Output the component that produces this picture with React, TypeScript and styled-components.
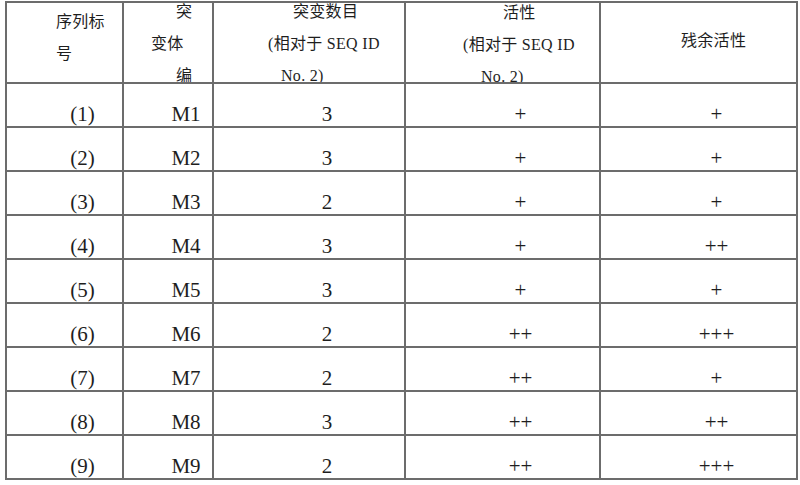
import React from "react";
import styled, { createGlobalStyle } from "styled-components";

const GlobalStyle = createGlobalStyle`
  html, body {
    margin: 0;
    padding: 0;
    background: #ffffff;
  }
`;

const Table = styled.table`
  border-collapse: collapse;
  table-layout: fixed;
  width: 791px;
  margin: 1px 0 0 5px;
  font-family: "Liberation Serif", "Noto Sans CJK SC", serif;
  color: #1e1e1e;

  td,
  th {
    border: 2px solid #6c6c6c;
  }
`;

const HeadRow = styled.tr`
  height: 80px;
`;

const HeadCell = styled.th`
  padding: 0;
  vertical-align: top;
  font-weight: normal;
  text-align: left;
`;

const HeadStack = styled.div<{ $top: number }>`
  height: 79px;
  overflow: hidden;
  display: flex;
  flex-direction: column;
  gap: 14px;
  padding-top: ${(p) => p.$top}px;
  box-sizing: border-box;
`;

const HeadLine = styled.span<{ $indent: number }>`
  display: block;
  font-size: 16px;
  line-height: 18px;
  letter-spacing: 0.3px;
  white-space: nowrap;
  padding-left: ${(p) => p.$indent}px;
`;

const BodyRow = styled.tr`
  height: 44px;
`;

const BodyCell = styled.td`
  padding: 0 0 0 36px;
  vertical-align: bottom;
  text-align: center;
  font-size: 21px;
  line-height: 24px;
`;

type Header = { top: number; lines: [string, number][] };

const headers: Header[] = [
  { top: 10, lines: [["序列标", 49], ["号", 49]] },
  { top: 0, lines: [["突", 52], ["变体", 27], ["编", 52]] },
  { top: 0, lines: [["突变数目", 79], ["(相对于 SEQ ID", 54], ["No. 2)", 67]] },
  { top: 1, lines: [["活性", 97], ["(相对于 SEQ ID", 57], ["No. 2)", 75]] },
  { top: 29, lines: [["残余活性", 80]] },
];

const widths = [117, 90, 192, 195, 197];

const rows: [string, string, string, string, string][] = [
  ["(1)", "M1", "3", "+", "+"],
  ["(2)", "M2", "3", "+", "+"],
  ["(3)", "M3", "2", "+", "+"],
  ["(4)", "M4", "3", "+", "++"],
  ["(5)", "M5", "3", "+", "+"],
  ["(6)", "M6", "2", "++", "+++"],
  ["(7)", "M7", "2", "++", "+"],
  ["(8)", "M8", "3", "++", "++"],
  ["(9)", "M9", "2", "++", "+++"],
];

export default function App() {
  return (
    <>
      <GlobalStyle />
      <Table>
        <colgroup>
          {widths.map((w, i) => (
            <col key={i} style={{ width: w }} />
          ))}
        </colgroup>
        <thead>
          <HeadRow>
            {headers.map((h, i) => (
              <HeadCell key={i}>
                <HeadStack $top={h.top}>
                  {h.lines.map(([text, indent], j) => (
                    <HeadLine key={j} $indent={indent}>
                      {text}
                    </HeadLine>
                  ))}
                </HeadStack>
              </HeadCell>
            ))}
          </HeadRow>
        </thead>
        <tbody>
          {rows.map((r, i) => (
            <BodyRow key={i}>
              {r.map((c, j) => (
                <BodyCell key={j}>{c}</BodyCell>
              ))}
            </BodyRow>
          ))}
        </tbody>
      </Table>
    </>
  );
}
